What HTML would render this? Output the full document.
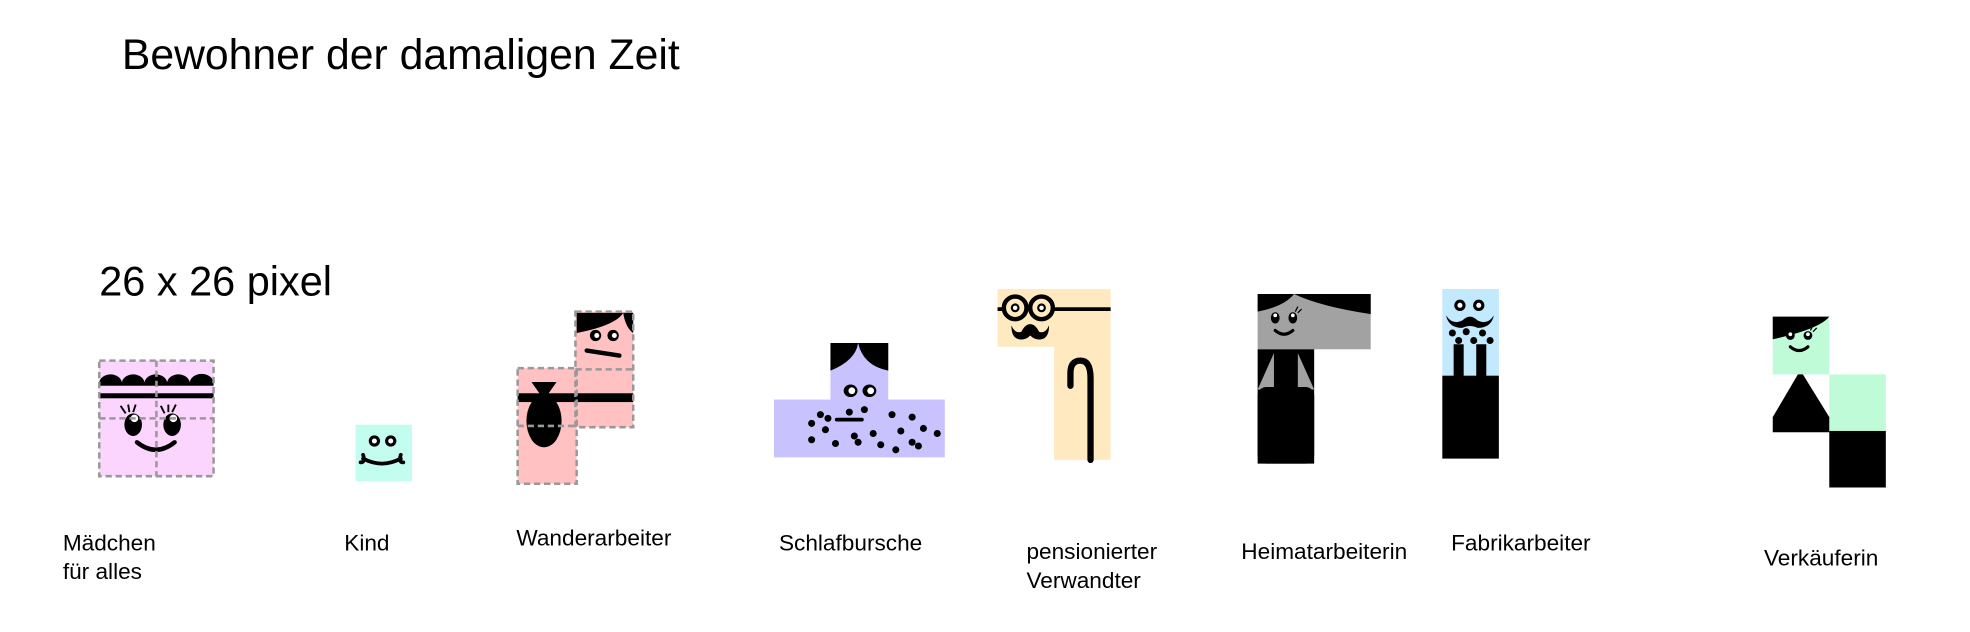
<!DOCTYPE html>
<html><head><meta charset="utf-8"><style>
html,body{margin:0;padding:0;background:#fff;width:1970px;height:632px;overflow:hidden}
svg{display:block}
text{font-family:"Liberation Sans",sans-serif;fill:#000}
</style></head><body>
<svg width="1970" height="632" viewBox="0 0 1568 503" xmlns="http://www.w3.org/2000/svg">
<text x="97" y="55" font-size="34">Bewohner der damaligen Zeit</text>
<text x="79" y="235" font-size="33">26 x 26 pixel</text>

<!-- Mädchen -->
<rect x="79" y="287" width="91" height="92" fill="#fbd5fe"/>
<g fill="#000">
<path d="M79 305 a9 7 0 0 1 18 0 a9 7 0 0 1 18 0 a9 7 0 0 1 18 0 a9 7 0 0 1 18 0 a9 7 0 0 1 19 0z"/>
<rect x="79" y="304" width="91" height="3"/>
<rect x="79" y="313" width="91" height="4"/>
<ellipse cx="106" cy="338" rx="7" ry="9"/><ellipse cx="137" cy="338" rx="7" ry="9"/>
</g>
<circle cx="107" cy="333" r="3" fill="#fff"/><circle cx="138" cy="333" r="3" fill="#fff"/>
<path d="M100 329 l-4 -6 M103 328 l-1 -6 M106 328 l2 -6 M131 329 l-3 -6 M134 328 l0 -6 M137 328 l3 -6" stroke="#000" stroke-width="1.5"/>
<path d="M109 352 q15 12 30 0" stroke="#000" stroke-width="3.5" fill="none" stroke-linecap="round"/>
<g stroke="#999" stroke-width="2" stroke-dasharray="5 3" fill="none">
<rect x="79" y="287" width="91" height="92"/>
<line x1="124.5" y1="287" x2="124.5" y2="379"/><line x1="79" y1="333" x2="170" y2="333"/>
</g>

<!-- Kind -->
<rect x="283" y="338" width="45" height="45" fill="#c3fdef"/>
<circle cx="298" cy="351" r="4.5" fill="#000"/><circle cx="311" cy="351" r="4.5" fill="#000"/>
<circle cx="298" cy="351" r="2" fill="#fff"/><circle cx="311" cy="351" r="2" fill="#fff"/>
<path d="M289 362 q2 6 -2 6 M289 365 q15 8 30 0 M319 362 q-2 6 2 6" stroke="#000" stroke-width="3" fill="none" stroke-linecap="round"/>

<!-- Wanderarbeiter -->
<rect x="458" y="248" width="46" height="92" fill="#ffc1c1"/>
<rect x="412" y="293" width="47" height="92" fill="#ffc1c1"/>
<path d="M459 249 h45 v16 q-6 -4 -8 -16 q-6 10 -37 16z" fill="#000"/>
<circle cx="474" cy="267" r="4.5" fill="#000"/><circle cx="488" cy="267" r="4.5" fill="#000"/>
<circle cx="475" cy="267" r="2" fill="#fff"/><circle cx="489" cy="267" r="2" fill="#fff"/>
<path d="M467 279 l26 4" stroke="#000" stroke-width="3.5" stroke-linecap="round"/>
<rect x="412" y="313" width="92" height="7" fill="#000"/>
<path d="M423 304 h20 l-7 10 h-6z" fill="#000"/>
<ellipse cx="433" cy="335" rx="14" ry="21" fill="#000"/>
<g stroke="#999" stroke-width="2" stroke-dasharray="5 3" fill="none">
<rect x="458" y="248" width="46" height="92"/><line x1="458" y1="294" x2="504" y2="294"/>
<rect x="412" y="293" width="47" height="92"/><line x1="412" y1="339" x2="459" y2="339"/>
</g>

<!-- Schlafbursche -->
<rect x="661" y="273" width="46" height="46" fill="#c8c3ff"/>
<rect x="616" y="318" width="136" height="46" fill="#c8c3ff"/>
<path d="M661 273 h46 v22 q-20 -4 -24 -22 q-2 14 -22 22z" fill="#000"/>
<ellipse cx="677" cy="311" rx="5.5" ry="5" fill="#000"/><ellipse cx="692" cy="311" rx="5.5" ry="5" fill="#000"/>
<circle cx="678" cy="311" r="2.7" fill="#fff"/><circle cx="693" cy="311" r="2.7" fill="#fff"/>
<path d="M666 334 h20" stroke="#000" stroke-width="3" stroke-linecap="round"/>
<g fill="#000">
<circle cx="653" cy="330" r="2.8"/><circle cx="659" cy="333" r="2.8"/><circle cx="646" cy="337" r="2.8"/><circle cx="657" cy="342" r="2.8"/>
<circle cx="646" cy="350" r="2.8"/><circle cx="665" cy="353" r="2.8"/><circle cx="683" cy="352" r="2.8"/><circle cx="701" cy="354" r="2.8"/>
<circle cx="676" cy="328" r="2.8"/><circle cx="688" cy="326" r="2.8"/><circle cx="710" cy="330" r="2.8"/><circle cx="726" cy="332" r="2.8"/>
<circle cx="717" cy="343" r="2.8"/><circle cx="735" cy="341" r="2.8"/><circle cx="746" cy="345" r="2.8"/><circle cx="726" cy="352" r="2.8"/>
<circle cx="713" cy="358" r="2.8"/><circle cx="731" cy="355" r="2.8"/><circle cx="680" cy="347" r="2.8"/><circle cx="695" cy="345" r="2.8"/>
</g>

<!-- pensionierter Verwandter -->
<rect x="794" y="230" width="90" height="46" fill="#ffe9c1"/>
<rect x="839" y="275" width="45" height="91" fill="#ffe9c1"/>
<path d="M794 246 h90" stroke="#000" stroke-width="3"/>
<circle cx="808" cy="245" r="9" fill="#ffe9c1" stroke="#000" stroke-width="3.5"/>
<circle cx="829" cy="245" r="9" fill="#ffe9c1" stroke="#000" stroke-width="3.5"/>
<circle cx="808" cy="245" r="3.5" fill="#000"/><circle cx="829" cy="245" r="3.5" fill="#000"/>
<circle cx="808" cy="245" r="1.8" fill="#fff"/><circle cx="829" cy="245" r="1.8" fill="#fff"/>
<path d="M805 259 q3 7 8 5 q3 -6 7 -6 q4 0 7 6 q5 2 8 -5 q0 10 -6 11 q-5 1 -9 -3 q-4 4 -9 3 q-6 -1 -6 -11z" fill="#000"/>
<path d="M852 307 v-10 q0 -10 8 -10 q8 0 8 14 v65" stroke="#000" stroke-width="5" fill="none" stroke-linecap="round"/>

<!-- Heimatarbeiterin -->
<rect x="1001" y="234" width="90" height="44" fill="#a2a2a2"/>
<path d="M1001 234 h90 v16 q-40 -6 -61 -16 q-8 10 -29 14z" fill="#000"/>
<rect x="1001" y="278" width="45" height="91" fill="#000"/>
<path d="M1001 310 l13 -29 v30 z M1046 310 l-13 -29 v30z" fill="#a2a2a2"/>
<rect x="1001" y="308" width="45" height="61" rx="7" fill="#000"/>
<ellipse cx="1015" cy="253" rx="3.5" ry="4.5" fill="#000"/><ellipse cx="1029" cy="253" rx="3.5" ry="4.5" fill="#000"/>
<circle cx="1015" cy="251" r="1.5" fill="#fff"/><circle cx="1029" cy="251" r="1.5" fill="#fff"/>
<path d="M1031 248 l2 -4 M1033 249 l3 -3" stroke="#000" stroke-width="1"/>
<path d="M1015 263 q7 6 14 0" stroke="#000" stroke-width="2.5" fill="none" stroke-linecap="round"/>

<!-- Fabrikarbeiter -->
<rect x="1148" y="230" width="45" height="69" fill="#c3e9ff"/>
<rect x="1148" y="299" width="45" height="66" fill="#000"/>
<rect x="1157" y="274" width="8" height="26" fill="#000"/><rect x="1175" y="274" width="8" height="26" fill="#000"/>
<circle cx="1162" cy="243" r="4.5" fill="#000"/><circle cx="1177" cy="243" r="4.5" fill="#000"/>
<circle cx="1162" cy="243" r="2" fill="#fff"/><circle cx="1177" cy="243" r="2" fill="#fff"/>
<path d="M1151 251 q5 8 13 4 q6 -6 12 0 q8 4 13 -4 q-2 10 -13 10 q-6 -3 -12 0 q-11 0 -13 -10z" fill="#000"/>
<g fill="#000"><circle cx="1156" cy="265" r="2.8"/><circle cx="1167" cy="264" r="2.8"/><circle cx="1180" cy="265" r="2.8"/><circle cx="1161" cy="271" r="2.8"/><circle cx="1173" cy="271" r="2.8"/><circle cx="1186" cy="271" r="2.8"/></g>

<!-- Verkäuferin -->
<rect x="1411" y="252" width="45" height="46" fill="#c0fbd8"/>
<path d="M1411 252 h45 q-8 10 -45 18z" fill="#000"/>
<rect x="1456" y="298" width="45" height="45" fill="#c0fbd8"/>
<rect x="1456" y="343" width="45" height="45" fill="#000"/>
<path d="M1431 298 h4 l21 34 v12 h-45 v-12z" fill="#000"/>
<circle cx="1425" cy="267" r="3.5" fill="#000"/><circle cx="1439" cy="267" r="3.5" fill="#000"/>
<circle cx="1425" cy="266" r="1.5" fill="#fff"/><circle cx="1439" cy="266" r="1.5" fill="#fff"/>
<path d="M1441 263 l2 -4 M1443 264 l3 -3" stroke="#000" stroke-width="1"/>
<path d="M1425 276 q7 6 14 0" stroke="#000" stroke-width="2.5" fill="none" stroke-linecap="round"/>

<g font-size="18">
<text x="50" y="438">Mädchen</text><text x="50" y="461">für alles</text>
<text x="274" y="438">Kind</text>
<text x="411" y="434">Wanderarbeiter</text>
<text x="620" y="438">Schlafbursche</text>
<text x="817" y="445">pensionierter</text><text x="817" y="468">Verwandter</text>
<text x="988" y="445">Heimatarbeiterin</text>
<text x="1155" y="438">Fabrikarbeiter</text>
<text x="1404" y="450">Verkäuferin</text>
</g>
</svg>
</body></html>
